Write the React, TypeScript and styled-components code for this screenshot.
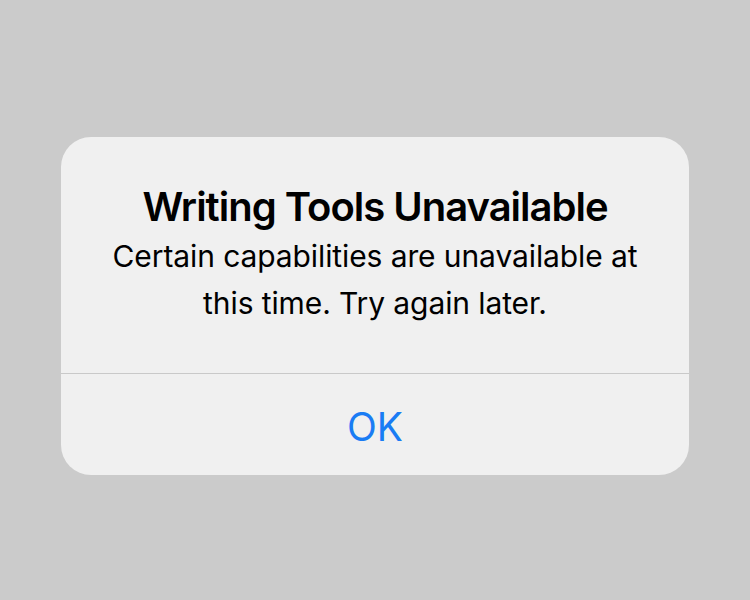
import React from 'react';
import styled, { createGlobalStyle } from 'styled-components';

const GlobalStyle = createGlobalStyle`
  html, body {
    margin: 0;
    padding: 0;
    background: #cbcbcb;
  }
  body {
    font-family: Inter, "Noto Sans", sans-serif;
    -webkit-font-smoothing: antialiased;
  }
`

const Page = styled.div`
  width: 750px;
  height: 600px;
  display: flex;
  justify-content: center;
  align-items: flex-start;
  padding-top: 137px;
  box-sizing: border-box;
`

const Alert = styled.div`
  width: 628px;
  background: #f0f0f0;
  border-radius: 30px;
  overflow: hidden;
`

const Content = styled.div`
  padding: 46px 30px 46px;
  text-align: center;
  border-bottom: 1.5px solid #c9c9c9;
`

const Title = styled.h1`
  margin: 0 0 2px;
  font-size: 40px;
  line-height: 48px;
  font-weight: 600;
  color: #000;
  letter-spacing: -1px;
`

const Message = styled.p`
  margin: 0;
  font-size: 30px;
  line-height: 47px;
  font-weight: 400;
  color: #000;
  letter-spacing: -0.1px;
`

const Button = styled.button`
  display: block;
  width: 100%;
  height: 101px;
  border: none;
  background: transparent;
  color: #1a7cf4;
  font-family: inherit;
  font-size: 39px;
  font-weight: 400;
  cursor: pointer;
  padding: 4px 0 0;
`

const App = () => {
  return (
    <Page>
      <GlobalStyle />
      <Alert>
        <Content>
          <Title>Writing Tools Unavailable</Title>
          <Message>
            Certain capabilities are unavailable at
            <br />
            this time. Try again later.
          </Message>
        </Content>
        <Button>OK</Button>
      </Alert>
    </Page>
  )
}

export default App
